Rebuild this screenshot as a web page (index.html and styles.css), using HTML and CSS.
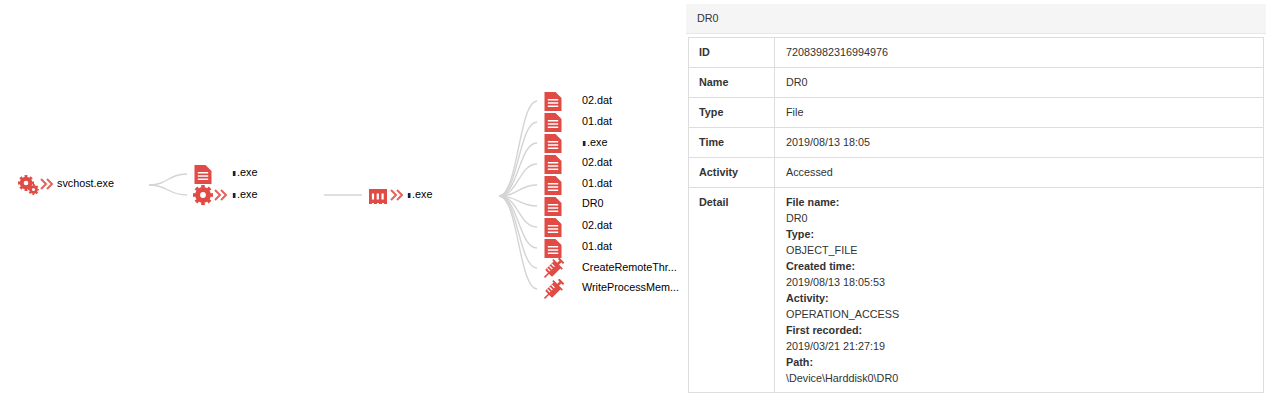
FILE: index.html
```html
<!DOCTYPE html>
<html lang="en">
<head>
<meta charset="utf-8">
<title>DR0</title>
<link rel="stylesheet" href="styles.css">
</head>
<body>
<svg class="sprites" aria-hidden="true">
  <symbol id="cog" viewBox="0 0 20 20">
    <circle cx="10" cy="10" r="5.4" fill="none" stroke="#e04b45" stroke-width="5"/>
    <circle cx="10" cy="10" r="8.4" fill="none" stroke="#e04b45" stroke-width="3.2" pathLength="80" stroke-dasharray="5.4 4.6" stroke-dashoffset="2.7"/>
  </symbol>
  <symbol id="file" viewBox="0 0 18 19">
    <path fill="#e04b45" d="M0.5 0H11.5L17.5 6V19H0.5Z"/>
    <path fill="none" stroke="#fff" stroke-width="1.6" d="M3.8 7.8H14.2M3.8 11H14.2M3.8 14.2H14.2"/>
  </symbol>
  <symbol id="chevrons" viewBox="0 0 14 12">
    <path fill="none" stroke="#e4625c" stroke-width="2" d="M1 1L6 6L1 11M7 1L12 6L7 11"/>
  </symbol>
  <symbol id="wall" viewBox="0 0 18 15">
    <path fill="#e04b45" d="M0 0H18V15H15V14H13V15H10V14H8V15H5V14H3V15H0Z"/>
    <path fill="none" stroke="#fff" stroke-width="2.2" d="M4 4.5V10.5M8.8 4.5V10.5M13.6 4.5V10.5"/>
  </symbol>
  <symbol id="syringe" viewBox="0 0 21 21">
    <g transform="rotate(45 10.5 10.5) translate(1.2 1.6) scale(.88)" fill="#e04b45">
      <rect x="9.6" y="17" width="1.8" height="7.5"/>
      <rect x="5" y="3.5" width="11" height="14.5" rx="1"/>
      <rect x="9" y="-2" width="3" height="6"/>
      <rect x="6.5" y="-3.4" width="8" height="2.4"/>
      <rect x="3" y="2.5" width="15" height="2"/>
      <path fill="none" stroke="#fff" stroke-width="1.4" d="M5.5 8H10M5.5 11.5H10M5.5 15H10"/>
    </g>
  </symbol>
</svg>
<main class="page">
  <section class="graph">
    <svg class="links" viewBox="0 0 686 401" aria-hidden="true">
      <path d="M149 185C168 185 168 174 187 174"/>
      <path d="M149 185C168 185 168 195 187 195"/>
      <path d="M324 195H362"/>
      <path d="M499 196C518 196 519 101 537 101"/>
      <path d="M499 196C518 196 519 122 537 122"/>
      <path d="M499 196C518 196 519 143 537 143"/>
      <path d="M499 196C518 196 519 164 537 164"/>
      <path d="M499 196C518 196 519 185 537 185"/>
      <path d="M499 196C518 196 519 206 537 206"/>
      <path d="M499 196C518 196 519 227 537 227"/>
      <path d="M499 196C518 196 519 248 537 248"/>
      <path d="M499 196C518 196 519 268 537 268"/>
      <path d="M499 196C518 196 519 289 537 289"/>
    </svg>

    <svg class="icon cog-big" style="left:18px;top:175px"><use href="#cog"/></svg>
    <svg class="icon cog-small" style="left:28px;top:184px"><use href="#cog"/></svg>
    <svg class="icon chev" style="left:40px;top:178px"><use href="#chevrons"/></svg>
    <span class="label" style="left:57px;top:176px">svchost.exe</span>

    <svg class="icon doc" style="left:194px;top:165px"><use href="#file"/></svg>
    <span class="label" style="left:232px;top:165px"><i class="mark"></i>.exe</span>
    <svg class="icon cog-main" style="left:193px;top:185px"><use href="#cog"/></svg>
    <svg class="icon chev" style="left:214px;top:189px"><use href="#chevrons"/></svg>
    <span class="label" style="left:232px;top:187px"><i class="mark"></i>.exe</span>

    <svg class="icon wall" style="left:369px;top:189px"><use href="#wall"/></svg>
    <svg class="icon chev" style="left:390px;top:189px"><use href="#chevrons"/></svg>
    <span class="label" style="left:407px;top:187px"><i class="mark"></i>.exe</span>

    <svg class="icon doc" style="left:544px;top:92px"><use href="#file"/></svg>
    <span class="label" style="left:582px;top:93px">02.dat</span>
    <svg class="icon doc" style="left:544px;top:113px"><use href="#file"/></svg>
    <span class="label" style="left:582px;top:114px">01.dat</span>
    <svg class="icon doc" style="left:544px;top:134px"><use href="#file"/></svg>
    <span class="label" style="left:582px;top:135px"><i class="mark"></i>.exe</span>
    <svg class="icon doc" style="left:544px;top:155px"><use href="#file"/></svg>
    <span class="label" style="left:582px;top:155px">02.dat</span>
    <svg class="icon doc" style="left:544px;top:176px"><use href="#file"/></svg>
    <span class="label" style="left:582px;top:176px">01.dat</span>
    <svg class="icon doc" style="left:544px;top:197px"><use href="#file"/></svg>
    <span class="label" style="left:582px;top:196px">DR0</span>
    <svg class="icon doc" style="left:544px;top:218px"><use href="#file"/></svg>
    <span class="label" style="left:582px;top:218px">02.dat</span>
    <svg class="icon doc" style="left:544px;top:239px"><use href="#file"/></svg>
    <span class="label" style="left:582px;top:239px">01.dat</span>
    <svg class="icon syringe" style="left:543px;top:258px"><use href="#syringe"/></svg>
    <span class="label" style="left:582px;top:260px">CreateRemoteThr...</span>
    <svg class="icon syringe" style="left:543px;top:279px"><use href="#syringe"/></svg>
    <span class="label" style="left:582px;top:280px">WriteProcessMem...</span>
  </section>

  <aside class="panel">
    <header class="panel-head">DR0</header>
    <table class="details">
      <tr><th>ID</th><td>72083982316994976</td></tr>
      <tr><th>Name</th><td>DR0</td></tr>
      <tr><th>Type</th><td>File</td></tr>
      <tr><th>Time</th><td>2019/08/13 18:05</td></tr>
      <tr><th>Activity</th><td>Accessed</td></tr>
      <tr class="detail-row">
        <th>Detail</th>
        <td>
          <b>File name:</b><br>DR0<br>
          <b>Type:</b><br>OBJECT_FILE<br>
          <b>Created time:</b><br>2019/08/13 18:05:53<br>
          <b>Activity:</b><br>OPERATION_ACCESS<br>
          <b>First recorded:</b><br>2019/03/21 21:27:19<br>
          <b>Path:</b><br>\Device\Harddisk0\DR0
        </td>
      </tr>
    </table>
  </aside>
</main>
</body>
</html>
```
FILE: styles.css
```css
* { box-sizing: border-box; }
html, body { margin: 0; padding: 0; background: #fff; }
body {
  font-family: "Liberation Sans", Arial, sans-serif;
  font-size: 10.8px;
  color: #333;
  overflow: hidden;
}
.sprites { position: absolute; width: 0; height: 0; }
.page { display: flex; width: 1270px; height: 401px; }
.graph { position: relative; flex: 0 0 686px; height: 401px; }
.links { position: absolute; left: 0; top: 0; width: 686px; height: 401px; }
.links path { fill: none; stroke: #d4d4d4; stroke-width: 1.4; }
.icon { position: absolute; display: block; }
.cog-big { width: 16px; height: 16px; }
.cog-small { width: 11px; height: 11px; }
.cog-main { width: 20px; height: 20px; }
.chev { width: 14px; height: 12px; }
.doc { width: 18px; height: 19px; }
.wall { width: 18px; height: 15px; }
.syringe { width: 21px; height: 21px; }
.label {
  position: absolute;
  line-height: 14px;
  color: #000;
  white-space: nowrap;
}
.mark {
  display: inline-block;
  width: 5px;
  height: 5px;
  vertical-align: 0;
  background: linear-gradient(90deg, #f3d9ae 0 1px, #17204a 1px 3px, #5f9fb5 3px 4px, #fff 4px);
}
.panel { flex: 1 1 auto; padding: 4px 4px 0 0; }
.panel-head {
  height: 30px;
  padding: 0 11px;
  line-height: 29px;
  background: #f5f5f5;
  border-bottom: 1px solid #e8e8e8;
  color: #333;
}
.details {
  width: 576px;
  margin: 3px 0 0 2px;
  border-collapse: collapse;
  table-layout: fixed;
  color: #333;
}
.details th, .details td {
  border: 1px solid #ddd;
  padding: 6px 11px 7px;
  line-height: 16px;
  text-align: left;
  vertical-align: top;
  font-size: 10.8px;
}
.details .detail-row th, .details .detail-row td { padding-bottom: 6px; }
.details th { width: 86px; font-weight: 700; padding-left: 10px; }
.details b { font-weight: 700; }
```
